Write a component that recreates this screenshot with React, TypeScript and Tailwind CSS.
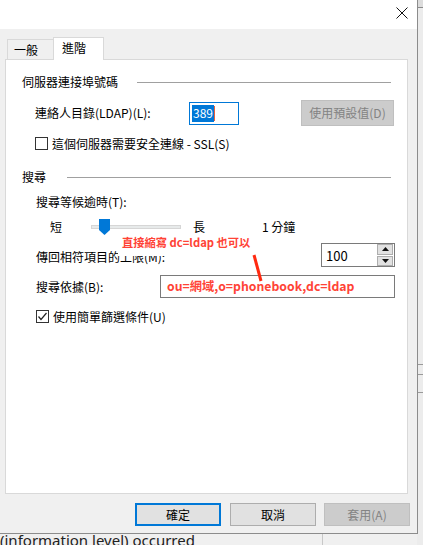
const cjk = "font-['Noto_Sans_CJK_TC','Noto_Sans',sans-serif]";

function Checkbox({ checked }: { checked?: boolean }) {
  return (
    <span className="flex h-[13px] w-[13px] shrink-0 items-center justify-center border border-[#333333] bg-white">
      {checked && (
        <svg width="11" height="11" viewBox="0 0 11 11">
          <polyline points="1.5,5.5 4,8.5 9.5,2" fill="none" stroke="#222" strokeWidth="1.2" />
        </svg>
      )}
    </span>
  );
}

function SectionHeader({ label, gap }: { label: string; gap: string }) {
  return (
    <div className="flex h-[16px] items-center pl-[16px] pr-[16px]">
      <span className="leading-none">{label}</span>
      <span className={`h-px flex-1 bg-[#a0a0a0] ${gap}`} />
    </div>
  );
}

export default function App() {
  return (
    <div className={`relative h-[545px] w-[423px] overflow-hidden bg-[#f0f0f0] text-[12px] text-black ${cjk}`}>
      {/* window behind the dialog */}
      <div className="absolute right-0 top-0 h-[545px] w-[6px] bg-[#ececec]">
        <div className="h-[8px] border-b border-[#8a8a8a] bg-[#dcdcdc]" />
        <div className="mt-[356px] h-px bg-[#9a9a9a]" />
        <div className="mt-[9px] h-px bg-[#9a9a9a]" />
        <div className="mt-[17px] h-px bg-[#9a9a9a]" />
      </div>
      <div className="absolute left-0 top-[533px] whitespace-nowrap font-['Noto_Sans',sans-serif] text-[15px] leading-none text-[#222]">
        (information level) occurred
      </div>
      <div className="absolute left-[322px] top-[530px] h-[20px] w-px bg-[#c8c8c8]" />

      {/* dialog */}
      <div className="absolute left-0 top-0 flex h-[534px] w-[418px] flex-col border-r border-b border-[#8c8c8c] bg-[#f0f0f0]">
        <div className="relative h-[29px] shrink-0 bg-white">
          <svg className="absolute left-[396px] top-[7px]" width="12" height="12" viewBox="0 0 12 12">
            <path d="M0.5 0.5 L11.5 11.5 M11.5 0.5 L0.5 11.5" stroke="#111" strokeWidth="1" />
          </svg>
        </div>

        <div className="flex flex-col pl-[5px] pt-[8px]">
          {/* tabs */}
          <div className="flex h-[22px] items-end pl-[2px]">
            <div className="flex h-[20px] w-[46px] items-center border-l border-t border-[#d9d9d9] bg-[#f0f0f0] pl-[6px] leading-none">
              一般
            </div>
            <div className="relative z-10 -mb-px flex h-[23px] w-[51px] items-center border-l border-r border-t border-[#d9d9d9] bg-white pb-[3px] pl-[8px] leading-none">
              進階
            </div>
          </div>

          {/* panel */}
          <div className="relative h-[435px] w-[403px] border border-[#d9d9d9] bg-white pt-[14px]">
            <SectionHeader label="伺服器連接埠號碼" gap="ml-[19px]" />

            <div className="mt-[10px] flex h-[26px] items-center pl-[29px]">
              <span className="w-[154px] leading-none">連絡人目錄(LDAP)(L):</span>
              <div className="flex h-[23px] w-[50px] items-center border border-[#0078d7] bg-white pl-[2px]">
                <span className="flex h-[17px] items-center bg-[#0078d7] px-px leading-none text-white">389</span>
                <span className="h-[15px] w-px bg-[#e8603c]" />
              </div>
              <div className="ml-[62px] flex h-[26px] w-[93px] items-center justify-center border border-[#bfbfbf] bg-[#cccccc] leading-none text-[#838383]">
                使用預設值(D)
              </div>
            </div>

            <div className="mt-[11px] flex h-[13px] items-center gap-[4px] pl-[29px]">
              <Checkbox />
              <span className="leading-none">這個伺服器需要安全連線 - SSL(S)</span>
            </div>

            <div className="mt-[19px]">
              <SectionHeader label="搜尋" gap="ml-[21px]" />
            </div>

            <div className="mt-[9px] flex h-[16px] items-center pl-[30px] leading-none">搜尋等候逾時(T):</div>

            <div className="mt-[9px] flex h-[16px] items-center pl-[44px]">
              <span className="w-[41px] leading-none">短</span>
              <div className="relative flex h-[16px] w-[90px] items-center">
                <div className="h-[4px] w-full border border-[#d6d6d6] bg-[#e7eaea]" />
                <svg className="absolute left-[8px] top-0" width="11" height="16" viewBox="0 0 11 16">
                  <path d="M0 0 H11 V11 L5.5 16 L0 11 Z" fill="#0078d7" />
                </svg>
              </div>
              <span className="ml-[12px] w-[69px] leading-none">長</span>
              <span className="leading-none">1 分鐘</span>
            </div>

            <div className="mt-[8px] flex h-[24px] items-center pl-[30px]">
              <span className="w-[285px] pt-[4px] leading-none">傳回相符項目的上限(M):</span>
              <div className="flex h-[24px] w-[74px] items-center border border-[#7a7a7a] bg-white pl-[4px] pr-px">
                <span className="flex-1 text-[13px] leading-none">100</span>
                <div className="flex h-[22px] w-[16px] flex-col gap-px">
                  <div className="flex flex-1 items-center justify-center border border-[#adadad] bg-[#e1e1e1]">
                    <svg width="7" height="4" viewBox="0 0 7 4"><path d="M3.5 0 L7 4 H0 Z" fill="#111" /></svg>
                  </div>
                  <div className="flex flex-1 items-center justify-center border border-[#adadad] bg-[#e1e1e1]">
                    <svg width="7" height="4" viewBox="0 0 7 4"><path d="M0 0 H7 L3.5 4 Z" fill="#111" /></svg>
                  </div>
                </div>
              </div>
            </div>

            <div className="mt-[8px] flex h-[23px] items-center pl-[30px]">
              <span className="w-[124px] leading-none">搜尋依據(B):</span>
              <div className="flex h-[23px] w-[235px] items-center border border-[#7a7a7a] bg-white pl-[6px]">
                <span className="text-[12.25px] font-bold leading-none text-[#ff4336]">ou=網域,o=phonebook,dc=ldap</span>
              </div>
            </div>

            <div className="mt-[12px] flex h-[13px] items-center gap-[4px] pl-[30px]">
              <Checkbox checked />
              <span className="leading-none">使用簡單篩選條件(U)</span>
            </div>

            {/* annotation pasted over the dialog */}
            <div className="absolute left-[112px] top-[173px] flex h-[23px] w-[168px] items-center bg-white pl-[4px] pb-[3px]">
              <span className="whitespace-nowrap text-[11.25px] font-bold leading-none text-[#ff4336]">直接縮寫 dc=ldap 也可以</span>
            </div>
            <svg className="absolute left-[246px] top-[194px]" width="12" height="28" viewBox="0 0 12 28">
              <path d="M2 1 L9 27" stroke="#ff2a10" strokeWidth="3" />
            </svg>
          </div>

          {/* buttons */}
          <div className="mt-[9px] flex h-[23px] gap-[9px] pl-[130px]">
            <div className="flex h-[23px] w-[86px] items-center justify-center border-2 border-[#0078d7] bg-[#e1e1e1] leading-none">確定</div>
            <div className="flex h-[23px] w-[86px] items-center justify-center border border-[#adadad] bg-[#e1e1e1] leading-none">取消</div>
            <div className="-ml-px flex h-[23px] w-[86px] items-center justify-center border border-[#bfbfbf] bg-[#cccccc] leading-none text-[#838383]">
              套用(A)
            </div>
          </div>
        </div>
      </div>
    </div>
  );
}
